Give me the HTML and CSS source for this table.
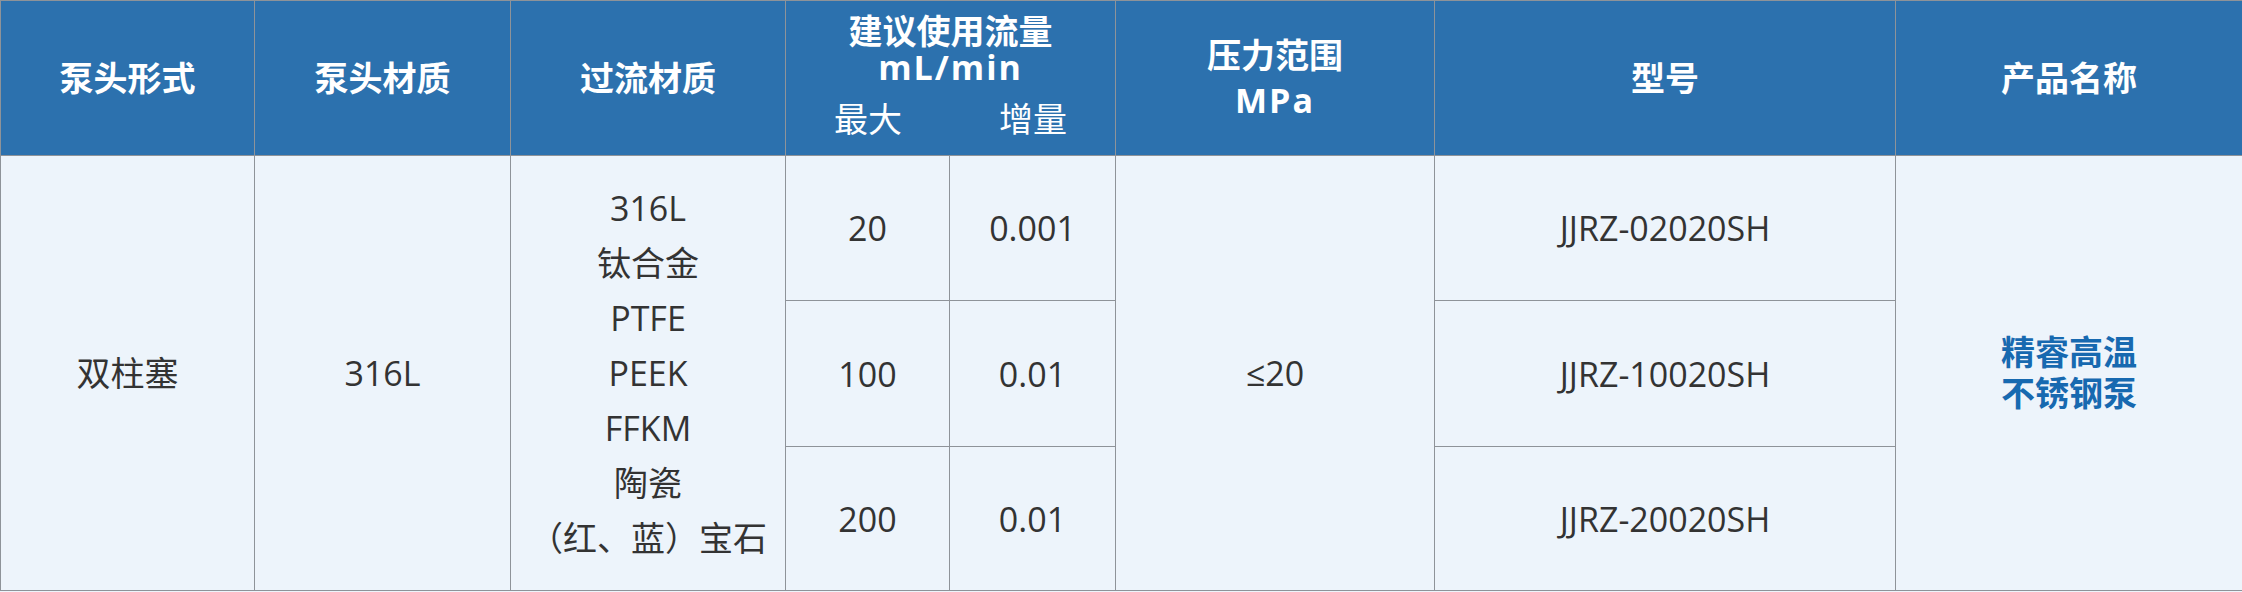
FILE: index.html
```html
<!DOCTYPE html>
<html lang="zh-CN">
<head>
<meta charset="utf-8">
<title>精睿高温不锈钢泵</title>
<link rel="stylesheet" href="styles.css">
</head>
<body>
<table class="spec">
  <colgroup>
    <col class="c1"><col class="c2"><col class="c3"><col class="c4"><col class="c5"><col class="c6"><col class="c7"><col class="c8">
  </colgroup>
  <thead>
    <tr class="head-row">
      <th>泵头形式</th>
      <th>泵头材质</th>
      <th>过流材质</th>
      <th colspan="2" class="flow-head">
        <div class="flow-title">建议使用流量</div>
        <div class="flow-unit latin">mL/min</div>
        <div class="flow-sub"><span>最大</span><span>增量</span></div>
      </th>
      <th class="press-head">
        <div>压力范围</div>
        <div class="latin">MPa</div>
      </th>
      <th>型号</th>
      <th>产品名称</th>
    </tr>
  </thead>
  <tbody>
    <tr class="r1">
      <td rowspan="3">双柱塞</td>
      <td rowspan="3">316L</td>
      <td rowspan="3" class="materials">
        <div>316L</div>
        <div>钛合金</div>
        <div>PTFE</div>
        <div>PEEK</div>
        <div>FFKM</div>
        <div>陶瓷</div>
        <div>（红、蓝）宝石</div>
      </td>
      <td>20</td>
      <td>0.001</td>
      <td rowspan="3">≤20</td>
      <td>JJRZ-02020SH</td>
      <td rowspan="3" class="product"><div>精睿高温</div><div>不锈钢泵</div></td>
    </tr>
    <tr class="r2">
      <td>100</td>
      <td>0.01</td>
      <td>JJRZ-10020SH</td>
    </tr>
    <tr class="r3">
      <td>200</td>
      <td>0.01</td>
      <td>JJRZ-20020SH</td>
    </tr>
  </tbody>
</table>
</body>
</html>
```
FILE: styles.css
```css
html, body {
  margin: 0;
  padding: 0;
  background: #edf4fb;
}

.spec {
  width: 2242px;
  border-collapse: collapse;
  table-layout: fixed;
  font-family: "Open Sans", "Noto Sans CJK SC", sans-serif;
  font-size: 34px;
  color: #333333;
}

.c1 { width: 254px; }
.c2 { width: 256px; }
.c3 { width: 275px; }
.c4 { width: 164px; }
.c5 { width: 166px; }
.c6 { width: 319px; }
.c7 { width: 461px; }
.c8 { width: 347px; }

.spec th,
.spec td {
  border: 1px solid #8e9399;
  text-align: center;
  vertical-align: middle;
  padding: 0;
}

.spec th {
  background: #2c71ae;
  color: #ffffff;
  font-weight: 700;
  line-height: 40px;
}

.head-row { height: 155px; }

.spec th.flow-head {
  vertical-align: top;
}

.flow-head .flow-title {
  line-height: 36px;
  margin-top: 12px;
}

.flow-head .flow-unit {
  line-height: 36px;
}

.spec .latin {
  letter-spacing: 2px;
}

.flow-head .flow-sub {
  display: grid;
  grid-template-columns: 164px 166px;
  font-weight: 400;
  line-height: 40px;
  margin-top: 14px;
}

.spec th.press-head {
  line-height: 45px;
}

.spec td {
  background: #edf4fb;
  line-height: 40px;
}

.r1 { height: 145px; }
.r2 { height: 146px; }
.r3 { height: 144px; }

.spec td.materials {
  line-height: 55px;
}

.spec td.product {
  color: #1769b0;
  font-weight: 700;
  line-height: 41px;
}
```
